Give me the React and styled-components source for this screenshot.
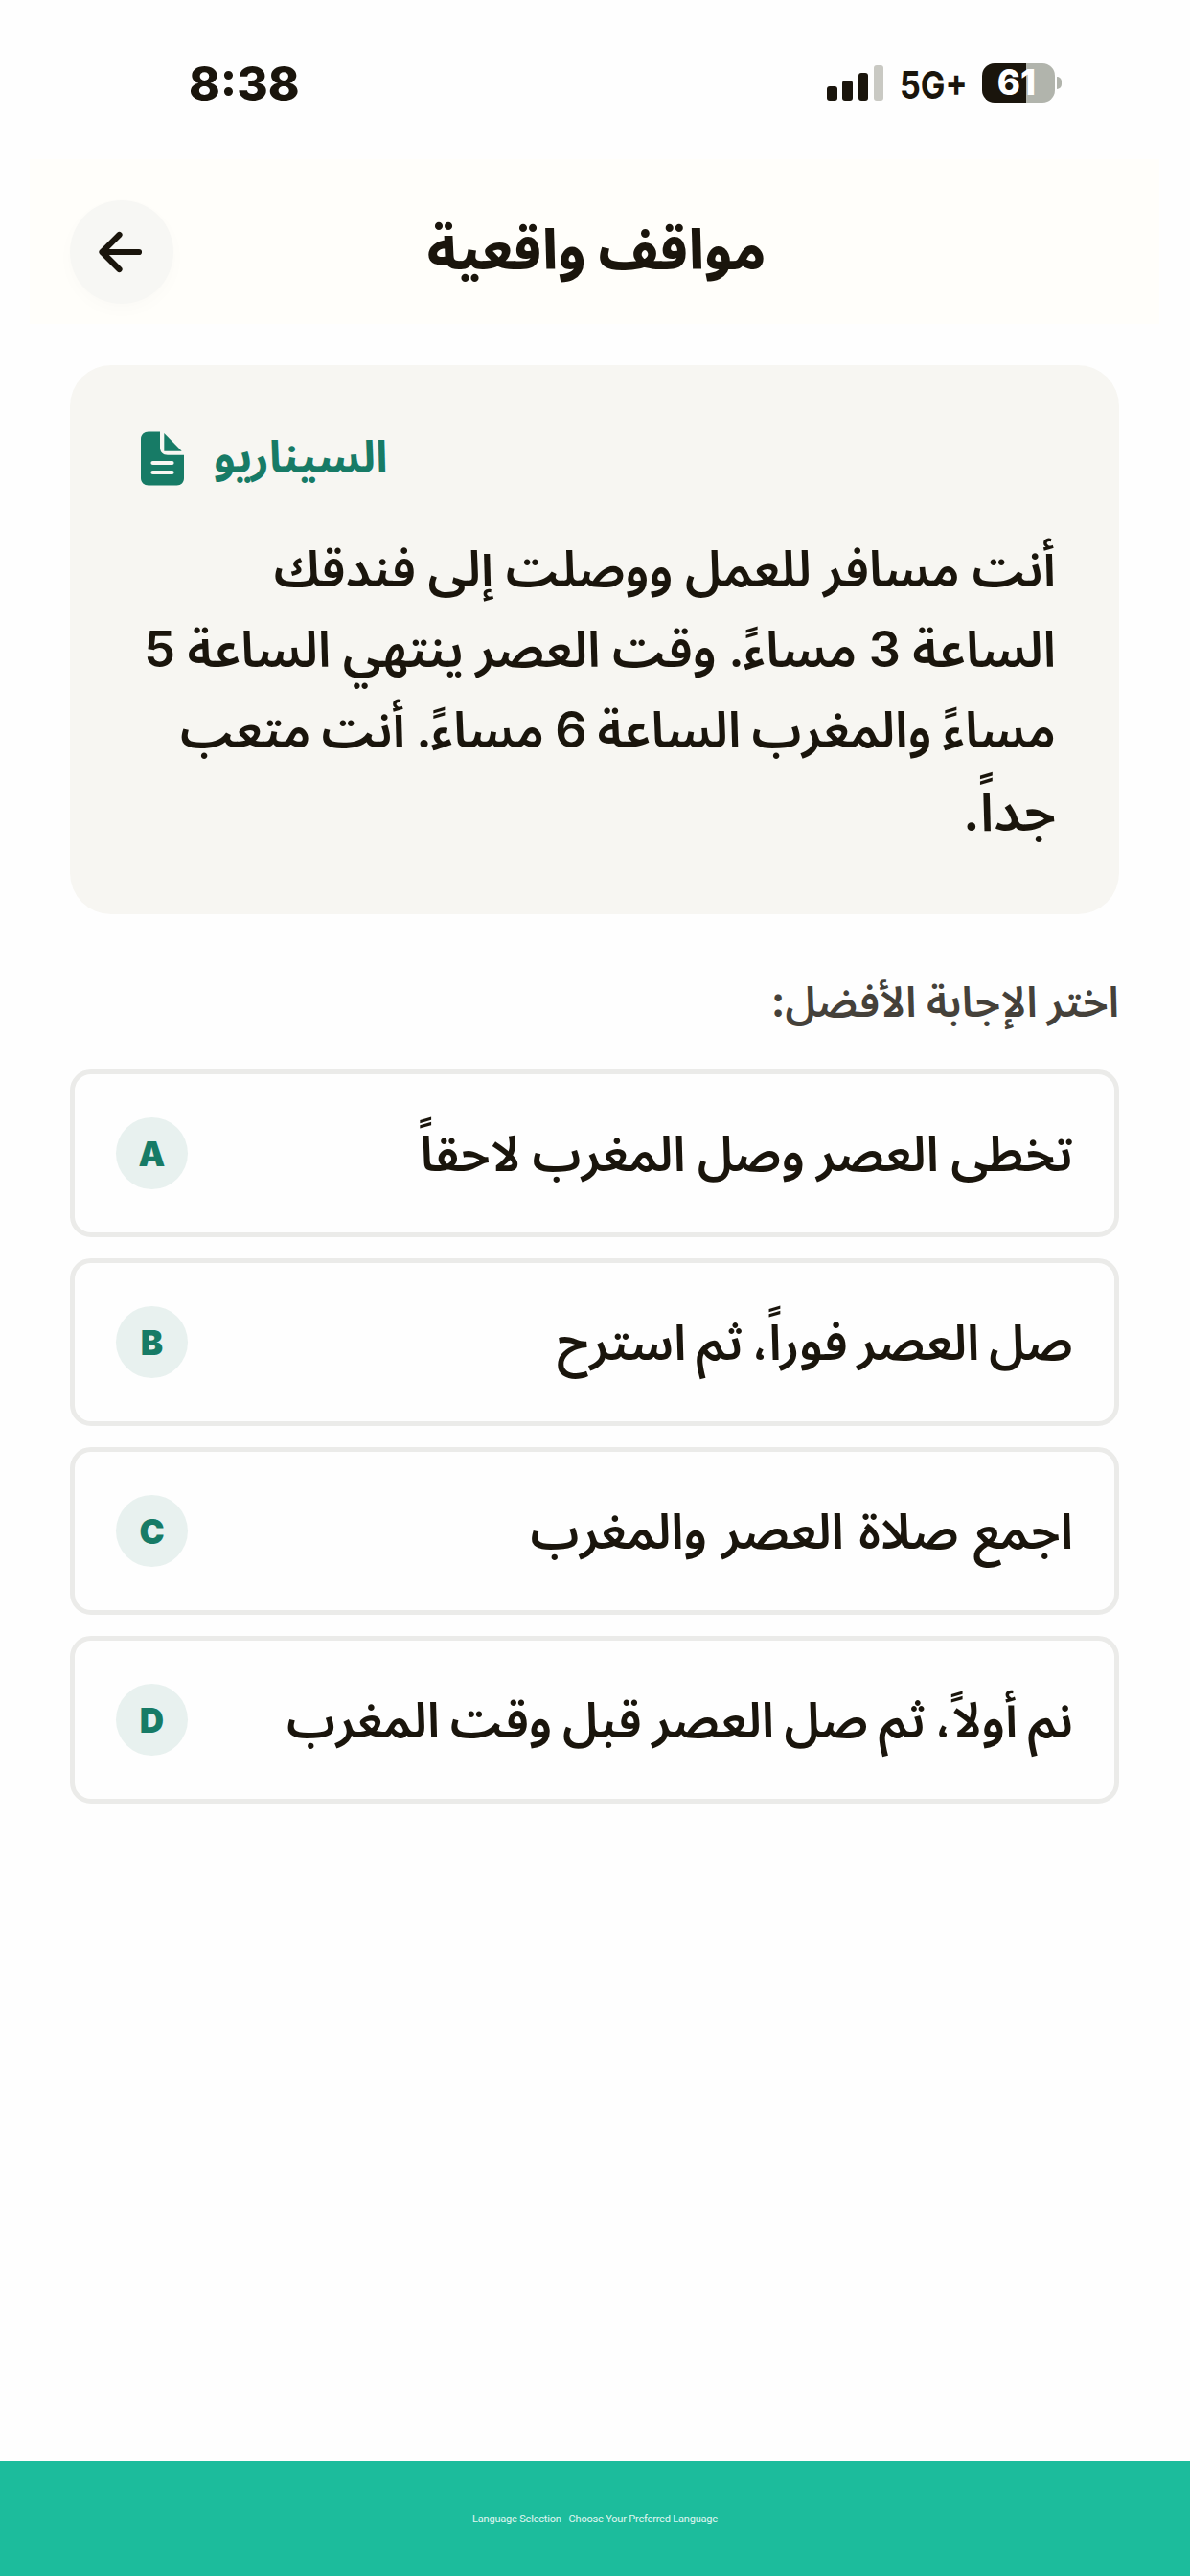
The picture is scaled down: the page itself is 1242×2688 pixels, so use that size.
import React from "react";
import styled, { createGlobalStyle } from "styled-components";

const ink = "#1a150c";
const green = "#177b66";
const sans = `Inter, "Noto Sans Arabic", sans-serif`;

const GlobalStyle = createGlobalStyle`
  * { box-sizing: border-box; }
  body { margin: 0; background: #fefefe; font-family: ${sans}; color: ${ink}; }
`;

const Screen = styled.div`
  display: flex;
  flex-direction: column;
  width: 1242px;
  height: 2688px;
  overflow: hidden;
  background: #fefefe;
`;

const StatusBar = styled.div`
  display: flex;
  align-items: center;
  justify-content: space-between;
  height: 166px;
  padding: 7px 134px 0 197px;
`;

const Clock = styled.span`
  padding-top: 1px;
  font-size: 49.5px;
  font-weight: 800;
  line-height: 60px;
`;

const Indicators = styled.div`
  display: flex;
  align-items: center;
`;

const SignalBars = styled.div`
  display: flex;
  align-items: flex-end;
  gap: 5.7px;
  height: 37px;
`;

const Bar = styled.i`
  width: 10.4px;
  height: ${(p) => p.$height}px;
  border-radius: 3px;
  background: ${(p) => (p.$dim ? "#c9c9c3" : ink)};
`;

const Network = styled.span`
  width: 70px;
  margin: 5px 16px 0 17px;
  font-size: 40px;
  font-weight: 700;
  line-height: 48px;
  white-space: nowrap;
  transform: scaleX(0.855);
  transform-origin: left center;
`;

const Battery = styled.div`
  display: flex;
  align-items: center;
  gap: 2px;
`;

const BatteryBody = styled.div`
  display: grid;
  place-items: center;
  width: 76px;
  height: 41px;
  padding-right: 4px;
  border-radius: 13px;
  background: linear-gradient(90deg, ${ink} 0 61%, #b1b4ac 61%);
  color: #fff;
  font-size: 36.5px;
  font-weight: 800;
  line-height: 41px;
`;

const BatteryTip = styled.i`
  width: 5px;
  height: 13px;
  border-radius: 0 6px 6px 0;
  background: #b1b4ac;
`;

const Header = styled.header`
  display: grid;
  grid-template-columns: 108px 1fr 108px;
  align-items: center;
  height: 172px;
  margin: 0 32px 0 31px;
  padding: 43px 42px 21px;
  background: #fffefa;
`;

const BackButton = styled.button`
  display: grid;
  place-items: center;
  width: 108px;
  height: 108px;
  padding: 0;
  border: 0;
  border-radius: 50%;
  background: #f7f7f4;
  box-shadow: 0 6px 18px rgba(60, 60, 40, 0.02);
`;

const Title = styled.h1`
  margin: 0;
  padding: 0 0 5px 4px;
  font-size: 57.2px;
  font-weight: 800;
  line-height: 80px;
  text-align: center;
`;

const Content = styled.main`
  flex: 1;
  display: flex;
  flex-direction: column;
  padding: 43px 74px 0 73px;
`;

const Card = styled.section`
  height: 573px;
  padding: 67px 66px 0 72px;
  border-radius: 43px;
  background: #f7f6f2;
`;

const CardHead = styled.div`
  display: flex;
  align-items: center;
  gap: 31px;
  height: 60px;
  padding-left: 2px;
  color: ${green};
`;

const CardLabel = styled.h2`
  margin: 0;
  padding-bottom: 3px;
  font-size: 45.8px;
  font-weight: 700;
  line-height: 60px;
`;

const Scenario = styled.p`
  margin: 44px 0 0;
`;

const ScenarioLine = styled.span`
  display: block;
  font-size: ${(p) => p.$size || 52.1}px;
  font-weight: 640;
  line-height: 84.2px;
  white-space: nowrap;
  word-spacing: ${(p) => p.$spacing || 0}px;
`;

const Prompt = styled.h3`
  margin: 61px 0 0;
  height: 101px;
  font-size: 44.1px;
  font-weight: 650;
  line-height: 61px;
  color: #45413a;
`;

const Options = styled.div`
  display: flex;
  flex-direction: column;
  gap: 22px;
`;

const Option = styled.button`
  display: flex;
  align-items: center;
  justify-content: space-between;
  height: 175px;
  padding: 0 43px 0 43px;
  border: 5px solid #ebebe9;
  border-radius: 22px;
  background: #fefefe;
  font-family: inherit;
  color: ${ink};
`;

const OptionText = styled.span`
  padding-bottom: 2px;
  font-size: 51.1px;
  font-weight: 640;
  line-height: 70px;
  white-space: nowrap;
  word-spacing: ${(p) => p.$spacing}px;
`;

const Letter = styled.span`
  display: grid;
  place-items: center;
  width: 75px;
  height: 75px;
  border-radius: 50%;
  background: #e8f1ef;
  color: ${green};
  font-size: 35px;
  font-weight: 900;
  line-height: 42px;
`;

const Footer = styled.footer`
  display: grid;
  place-items: center;
  height: 120px;
  padding-top: 1px;
  background: #1cbc9c;
  color: #e0f6f1;
  font-family: Roboto, sans-serif;
  font-size: 11px;
  letter-spacing: -0.2px;
  line-height: 14px;
`;

const scenario = [
  { text: "أنت مسافر للعمل ووصلت إلى فندقك", spacing: -0.5 },
  { text: "الساعة 3 مساءً. وقت العصر ينتهي الساعة 5", spacing: -0.6 },
  { text: "مساءً والمغرب الساعة 6 مساءً. أنت متعب", spacing: -2 },
  { text: "جداً.", size: 55.5 },
];

const options = [
  { letter: "A", text: "تخطى العصر وصل المغرب لاحقاً", spacing: -0.5 },
  { letter: "B", text: "صل العصر فوراً، ثم استرح", spacing: -2.8 },
  { letter: "C", text: "اجمع صلاة العصر والمغرب", spacing: 2.5 },
  { letter: "D", text: "نم أولاً، ثم صل العصر قبل وقت المغرب", spacing: -2.2 },
];

const BackArrow = () => (
  <svg width="48" height="46" viewBox="0 0 48 46" fill="none" stroke={ink} strokeWidth="6.2" strokeLinecap="round" strokeLinejoin="round">
    <path d="M42 23H3.500M21.500 5L3.500 23L21.500 41" />
  </svg>
);

const DocumentIcon = () => (
  <svg width="45" height="57" viewBox="0 0 45 57">
    <path fill={green} d="M8 0.500H20V17C20 21.500 23 24.700 28 24.700H45V49C45 53.500 42 56.500 37.500 56.500H8C3.500 56.500 0 53.500 0 49V8C0 3.500 3.500 0.500 8 0.500Z" />
    <path fill={green} d="M24.300 2L42.700 20.800H24.300Z" />
    <path stroke="#f7f6f2" strokeWidth="4.2" strokeLinecap="round" d="M12.500 33H32.500M12.500 43H32.500" />
  </svg>
);

export default function App() {
  return (
    <Screen>
      <GlobalStyle />
      <StatusBar>
        <Clock>8:38</Clock>
        <Indicators>
          <SignalBars>
            <Bar $height={15} />
            <Bar $height={21} />
            <Bar $height={29} />
            <Bar $height={37} $dim />
          </SignalBars>
          <Network>5G+</Network>
          <Battery>
            <BatteryBody>61</BatteryBody>
            <BatteryTip />
          </Battery>
        </Indicators>
      </StatusBar>
      <Header>
        <BackButton>
          <BackArrow />
        </BackButton>
        <Title dir="rtl">مواقف واقعية</Title>
      </Header>
      <Content>
        <Card>
          <CardHead>
            <DocumentIcon />
            <CardLabel dir="rtl">السيناريو</CardLabel>
          </CardHead>
          <Scenario dir="rtl">
            {scenario.map((line) => (
              <ScenarioLine key={line.text} $size={line.size} $spacing={line.spacing}>
                {line.text}
              </ScenarioLine>
            ))}
          </Scenario>
        </Card>
        <Prompt dir="rtl">اختر الإجابة الأفضل:</Prompt>
        <Options>
          {options.map((option) => (
            <Option key={option.letter}>
              <Letter>{option.letter}</Letter>
              <OptionText dir="rtl" $spacing={option.spacing}>
                {option.text}
              </OptionText>
            </Option>
          ))}
        </Options>
      </Content>
      <Footer>Language Selection - Choose Your Preferred Language</Footer>
    </Screen>
  );
}
